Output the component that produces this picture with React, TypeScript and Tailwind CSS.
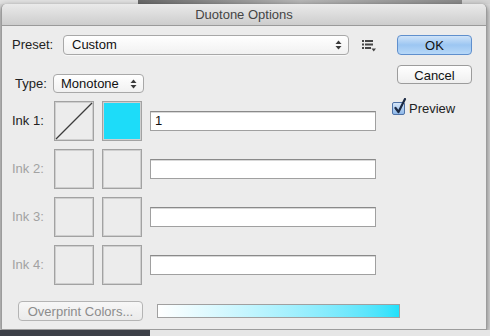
import React from "react";

const font = { fontFamily: '"Liberation Sans", Arial, sans-serif' };

function UpDown() {
  return (
    <svg width="7" height="10" viewBox="0 0 7 10" className="shrink-0">
      <path d="M3.5 0.5 L6.5 4 H0.5 Z" fill="#3a3a3a" />
      <path d="M3.5 9.5 L6.5 6 H0.5 Z" fill="#3a3a3a" />
    </svg>
  );
}

function ListIcon() {
  return (
    <svg width="14" height="12" viewBox="0 0 14 12">
      <rect x="0" y="0" width="2" height="2" fill="#444" />
      <rect x="3" y="0" width="8" height="2" fill="#444" />
      <rect x="0" y="3.5" width="2" height="2" fill="#444" />
      <rect x="3" y="3.5" width="8" height="2" fill="#444" />
      <rect x="0" y="7" width="2" height="2" fill="#444" />
      <rect x="3" y="7" width="6" height="2" fill="#444" />
      <path d="M9.5 8.5 H14 L11.75 11.5 Z" fill="#444" />
    </svg>
  );
}

function Check() {
  return (
    <div className="relative w-[13px] h-[13px] rounded-[2px] border border-[#4f72a6] bg-gradient-to-b from-[#d6e6f8] to-[#8db7e8]">
      <svg
        width="14"
        height="17"
        viewBox="0 0 14 17"
        className="absolute left-[0px] top-[-5px]"
      >
        <path
          d="M2.5 10 L5.5 14 L12 1"
          fill="none"
          stroke="#1c2a44"
          strokeWidth="2.2"
          strokeLinecap="round"
          strokeLinejoin="round"
        />
      </svg>
    </div>
  );
}

function Swatch({ kind }: { kind?: "none" | "cyan" }) {
  return (
    <div
      className={`relative w-[40px] h-[40px] border border-[#a2a2a2] shadow-[inset_0_0_0_1px_#cfcfcf] ${
        kind === "cyan" ? "bg-[#1ddcf9]" : "bg-[#ececec]"
      }`}
    >
      {kind === "none" && (
        <svg width="38" height="38" viewBox="0 0 38 38" className="absolute inset-0">
          <line x1="1" y1="37" x2="37" y2="1" stroke="#3c3c3c" strokeWidth="1.2" />
        </svg>
      )}
    </div>
  );
}

function InkRow({
  n,
  active,
  value,
}: {
  n: number;
  active?: boolean;
  value?: string;
}) {
  return (
    <div className="flex items-center h-[40px]">
      <span
        className={`w-[42px] pl-[10px] text-[13px] ${
          active ? "text-[#222]" : "text-[#a2a2a2]"
        }`}
      >
        Ink {n}:
      </span>
      <div className="ml-[10px] flex gap-[8px]">
        <Swatch kind={active ? "none" : undefined} />
        <Swatch kind={active ? "cyan" : undefined} />
      </div>
      <div className="ml-[8px] w-[226px] h-[20px] bg-white border border-[#a0a0a0] border-t-[#8a8a8a] shadow-[inset_0_1px_0_#d8d8d8] flex items-center pl-[4px] text-[13px] text-[#111]">
        {value}
      </div>
    </div>
  );
}

export default function App() {
  return (
    <div
      className="w-[490px] h-[336px] overflow-hidden flex flex-col bg-[#dadada]"
      style={font}
    >
      <div className="h-[4px] flex shrink-0">
        <div className="w-[138px] bg-[#e2e2e2]" />
        <div className="w-[324px] bg-gradient-to-r from-[#6a6a6a] via-[#b8b8b8] to-[#8a8a8a]" />
        <div className="flex-1 bg-[#d4d4d4]" />
      </div>

      <div className="ml-[1px] w-[486px] h-[326px] shrink-0 rounded-t-[5px] bg-[#ececec] border border-t-0 border-[#9c9c9c] shadow-[0_2px_6px_rgba(0,0,0,0.5)] flex flex-col overflow-hidden">
        <div className="h-[22px] shrink-0 rounded-t-[5px] bg-gradient-to-b from-[#eaeaea] to-[#cdcdcd] border-b border-[#9a9a9a] flex items-center justify-center text-[13px] text-[#454545]">
          Duotone Options
        </div>

        <div className="flex">
          <div className="w-[385px] flex flex-col">
            <div className="mt-[9px] flex items-center h-[20px]">
              <span className="pl-[10px] w-[61px] text-[13px] text-[#222]">Preset:</span>
              <div className="w-[286px] h-[20px] rounded-[4px] border border-[#a8a8a8] bg-gradient-to-b from-white to-[#f1f1f1] shadow-[0_1px_0_#f8f8f8] flex items-center pl-[8px] pr-[6px] text-[13px] text-[#111]">
                <span className="flex-1">Custom</span>
                <UpDown />
              </div>
              <div className="ml-[13px] mt-[2px]">
                <ListIcon />
              </div>
            </div>

            <div className="mt-[19px] flex items-center h-[19px]">
              <span className="pl-[13px] w-[51px] text-[13px] text-[#222]">Type:</span>
              <div className="w-[91px] h-[19px] rounded-[4px] border border-[#a8a8a8] bg-gradient-to-b from-white to-[#f1f1f1] flex items-center pl-[7px] pr-[6px] text-[13px] text-[#111]">
                <span className="flex-1">Monotone</span>
                <UpDown />
              </div>
            </div>

            <div className="mt-[8px] flex flex-col gap-[8px]">
              <InkRow n={1} active value="1" />
              <InkRow n={2} />
              <InkRow n={3} />
              <InkRow n={4} />
            </div>
          </div>

          <div className="flex flex-col">
            <button className="mt-[9px] ml-[10px] w-[75px] h-[20px] rounded-[4px] border border-[#5f8fcd] bg-gradient-to-b from-[#cfe3f8] via-[#9cc6f2] to-[#b7d8f8] text-[13px] text-[#111]">
              OK
            </button>
            <button className="mt-[10px] ml-[10px] w-[75px] h-[19px] rounded-[4px] border border-[#9c9c9c] bg-gradient-to-b from-white to-[#efefef] text-[13px] text-[#111]">
              Cancel
            </button>
            <div className="mt-[15px] ml-[5px] flex items-center gap-[4px]">
              <Check />
              <span className="text-[13px] text-[#222]">Preview</span>
            </div>
          </div>
        </div>

        <div className="mt-[16px] flex items-center">
          <button className="ml-[16px] w-[125px] h-[20px] rounded-[4px] border border-[#b4b4b4] bg-gradient-to-b from-[#f7f7f7] to-[#ebebeb] text-[13px] text-[#8c8c8c]">
            Overprint Colors...
          </button>
          <div className="ml-[14px] w-[243px] h-[14px] border border-[#a0a0a0] bg-gradient-to-r from-white to-[#1ee1fb]" />
        </div>
      </div>

      <div className="flex-1 flex">
        <div className="w-[150px] bg-[#3c3f47]" />
        <div className="flex-1 bg-[#e6e6e6]" />
      </div>
    </div>
  );
}
